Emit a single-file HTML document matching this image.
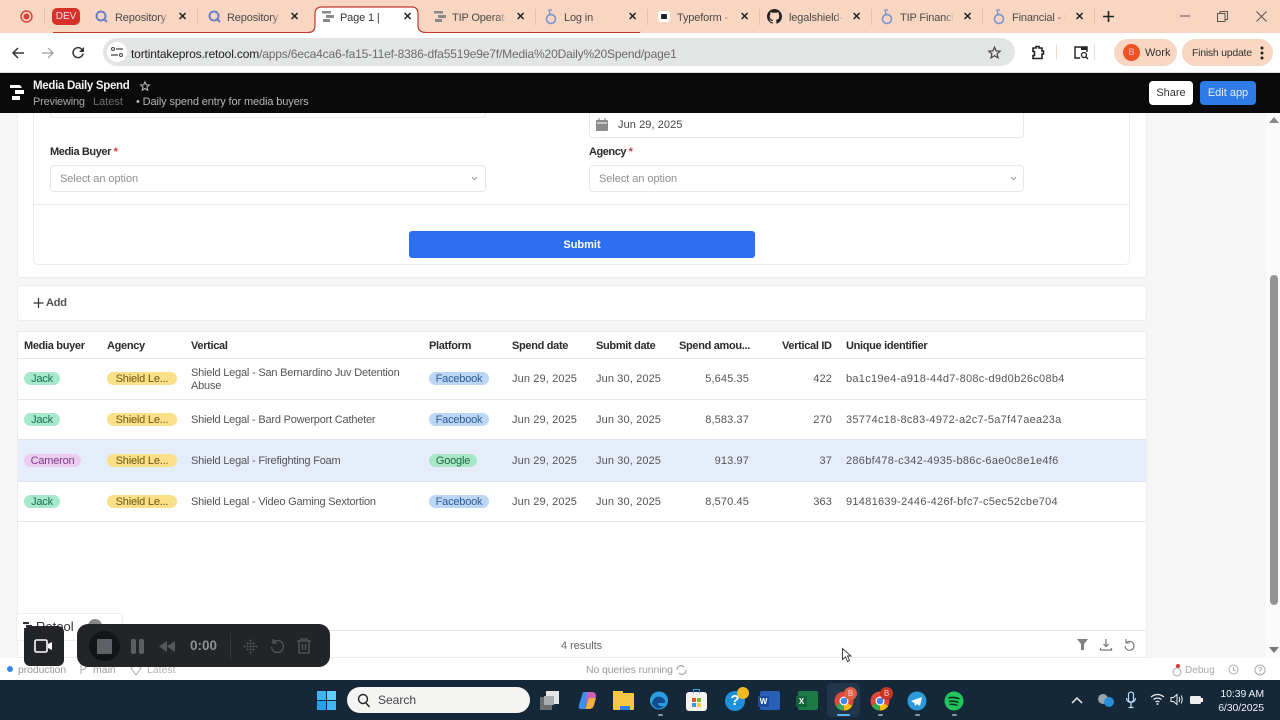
<!DOCTYPE html>
<html><head><meta charset="utf-8"><title>Media Daily Spend</title>
<style>
html,body{margin:0;padding:0;width:1280px;height:720px;overflow:hidden;background:#f6f6f6;font-family:"Liberation Sans",sans-serif}
.a{position:absolute}
.t{position:absolute;white-space:nowrap;line-height:16px}
.tab{position:absolute;top:10px;font-size:11px;line-height:16px;color:#4a4a4a;white-space:nowrap;letter-spacing:-.15px}
.f{width:54px;overflow:hidden;-webkit-mask-image:linear-gradient(90deg,#000 85%,transparent 100%);mask-image:linear-gradient(90deg,#000 85%,transparent 100%)}
.x{position:absolute;top:9px;font-size:11px;line-height:16px;color:#222;font-weight:bold}
.sep{position:absolute;top:9px;width:1px;height:16px;background:#e6bfa9}
.h{position:absolute;top:338px;font-size:11px;font-weight:bold;color:#2b2b2b;line-height:16px;white-space:nowrap;letter-spacing:-.32px}
.c{position:absolute;font-size:11px;color:#555;line-height:15px;white-space:nowrap;letter-spacing:.12px}
.v{letter-spacing:-.2px}
.u{letter-spacing:.28px}
.r{text-align:right}
.p{position:absolute;height:13px;border-radius:7px;font-size:11px;line-height:14px;text-align:center;white-space:nowrap;letter-spacing:-.2px}
.g{background:#a8e8cd;color:#17704e}.y{background:#fbe08a;color:#6e5610}.b{background:#bcd6f5;color:#2c5c96}.m{background:#eccdf0;color:#7a3a86}.gg{background:#a9e6c5;color:#1c6d47}
.line{position:absolute;left:17px;width:1129px;height:1px;background:#e8e8e8}
svg{position:absolute;overflow:visible}
</style></head><body>

<!-- tab strip -->
<div class="a" style="left:0;top:0;width:1280px;height:33px;background:#f9d6c1"></div>
<div class="a" style="left:0;top:33px;width:1280px;height:39px;background:#fff"></div>
<div class="a" style="left:53px;top:32px;width:262px;height:1px;background:#c0392f"></div>
<div class="a" style="left:420px;top:32px;width:220px;height:1px;background:#c0392f"></div>
<svg style="left:306px;top:6px" width="122" height="28"><path d="M2 26.500q7 0 7-7V8q0-7 7-7h90q6 0 6 7v11.500q0 7 8 7V28H2z" fill="#fff"/><path d="M2 26.500q7 0 7-7V8q0-7 7-7h90q6 0 6 7v11.500q0 7 8 7" fill="none" stroke="#c0392f" stroke-width="1.200"/></svg>

<svg style="left:20px;top:10px" width="14" height="14"><circle cx="6.500" cy="6.500" r="5.500" fill="none" stroke="#d9453c" stroke-width="1.500"/><circle cx="6.500" cy="6.500" r="3" fill="#d9453c"/></svg>
<div class="sep" style="left:44px"></div>
<div class="a" style="left:52px;top:8px;width:28px;height:17px;background:#d6322a;border-radius:5px;color:#fde;font-size:10px;line-height:17px;text-align:center">DEV</div>
<svg style="left:95px;top:10px" width="14" height="14"><circle cx="6" cy="6" r="4.500" fill="none" stroke="#6d7fc9" stroke-width="2"/><path d="M9 9l3 3" stroke="#6d7fc9" stroke-width="2"/></svg>
<div class="tab f" style="left:115px">Repository -</div><div class="x" style="left:178px">✕</div>
<div class="sep" style="left:197px"></div>
<svg style="left:208px;top:10px" width="14" height="14"><circle cx="6" cy="6" r="4.500" fill="none" stroke="#6d7fc9" stroke-width="2"/><path d="M9 9l3 3" stroke="#6d7fc9" stroke-width="2"/></svg>
<div class="tab f" style="left:227px">Repository -</div><div class="x" style="left:290px">✕</div>
<svg style="left:322px;top:11px" width="12" height="11"><path d="M0 0h9v2.500H0zM4 4h8v3H4zM1 8h7v3H1z" fill="#8a8a8a"/></svg>
<div class="tab" style="left:340px;color:#333">Page 1 |</div><div class="x" style="left:403px">✕</div>
<svg style="left:434px;top:11px" width="12" height="11"><path d="M0 0h9v2.500H0zM4 4h8v3H4zM1 8h7v3H1z" fill="#8a8a8a"/></svg>
<div class="tab f" style="left:452px">TIP Operatio</div><div class="x" style="left:516px">✕</div>
<div class="sep" style="left:535px"></div>
<svg style="left:545px;top:9px" width="12" height="16"><circle cx="6" cy="10" r="4.500" fill="none" stroke="#6f8fd0" stroke-width="1.500"/><path d="M5 5L4 1h3" fill="none" stroke="#6f8fd0" stroke-width="1.200"/></svg>
<div class="tab" style="left:564px">Log in</div><div class="x" style="left:628px">✕</div>
<div class="sep" style="left:647px"></div>
<div class="a" style="left:658px;top:11px;width:12px;height:11px;background:#fff;border-radius:3px"></div>
<div class="a" style="left:661px;top:14px;width:6px;height:5px;background:#222;border-radius:1px"></div>
<div class="tab f" style="left:677px">Typeform -</div><div class="x" style="left:740px">✕</div>
<div class="sep" style="left:759px"></div>
<svg style="left:767px;top:9px" width="15" height="15" viewBox="0 0 16 16"><path fill="#222" d="M8 0C3.580 0 0 3.580 0 8c0 3.540 2.290 6.530 5.470 7.590.4.070.55-.17.55-.38v-1.340c-2.230.48-2.690-1.070-2.690-1.070-.36-.93-.89-1.170-.89-1.170-.73-.5.050-.49.050-.49.800.060 1.230.830 1.230.830.710 1.220 1.870.87 2.330.66.070-.52.280-.87.510-1.070-1.780-.2-3.640-.89-3.640-3.950 0-.87.310-1.590.820-2.150-.08-.2-.36-1.020.080-2.120 0 0 .670-.21 2.200.82a7.600 7.600 0 0 1 4 0c1.530-1.040 2.200-.82 2.200-.82.440 1.100.160 1.920.080 2.120.510.560.820 1.270.820 2.150 0 3.070-1.870 3.750-3.650 3.950.290.250.540.730.540 1.480v2.190c0 .21.150.46.550.38A8 8 0 0 0 16 8c0-4.420-3.580-8-8-8z"/></svg>
<div class="tab f" style="left:789px">legalshield-</div><div class="x" style="left:852px">✕</div>
<div class="sep" style="left:871px"></div>
<svg style="left:881px;top:9px" width="12" height="16"><circle cx="6" cy="10" r="4.500" fill="none" stroke="#6f8fd0" stroke-width="1.500"/><path d="M5 5L4 1h3" fill="none" stroke="#6f8fd0" stroke-width="1.200"/></svg>
<div class="tab f" style="left:900px">TIP Financia</div><div class="x" style="left:963px">✕</div>
<div class="sep" style="left:982px"></div>
<svg style="left:993px;top:9px" width="12" height="16"><circle cx="6" cy="10" r="4.500" fill="none" stroke="#6f8fd0" stroke-width="1.500"/><path d="M5 5L4 1h3" fill="none" stroke="#6f8fd0" stroke-width="1.200"/></svg>
<div class="tab f" style="left:1012px">Financial - N</div><div class="x" style="left:1075px">✕</div>
<div class="sep" style="left:1094px"></div>
<svg style="left:1103px;top:11px" width="11" height="11"><path d="M5.500 0v11M0 5.500h11" stroke="#222" stroke-width="1.600"/></svg>
<svg style="left:1180px;top:15px" width="10" height="2"><path d="M0 1h10" stroke="#555"/></svg>
<svg style="left:1217px;top:11px" width="11" height="11"><rect x=".5" y="2.500" width="7.500" height="8" fill="none" stroke="#555"/><path d="M3 2.500V.5h7.500v8H8" fill="none" stroke="#555"/></svg>
<svg style="left:1256px;top:11px" width="11" height="11"><path d="M.5.5l10 10M10.500.5l-10 10" stroke="#555"/></svg>

<!-- toolbar -->
<svg style="left:12px;top:47px" width="13" height="12"><path d="M12 6H1M6 1L1 6l5 5" fill="none" stroke="#333" stroke-width="1.500"/></svg>
<svg style="left:42px;top:47px" width="13" height="12"><path d="M0 6h11M6 1l5 5-5 5" fill="none" stroke="#999" stroke-width="1.200"/></svg>
<svg style="left:72px;top:46px" width="13" height="13"><path d="M11 7.500A5 5 0 1 1 9.500 3L11.500 5" fill="none" stroke="#333" stroke-width="1.500"/><path d="M12 1v5H7z" fill="#333"/></svg>
<div class="a" style="left:103px;top:38px;width:912px;height:28px;background:#e3e5e5;border-radius:14px"></div>
<div class="a" style="left:107px;top:42px;width:20px;height:20px;background:#fff;border-radius:10px"></div>
<svg style="left:111px;top:47px" width="12" height="10"><path d="M5 2h7M0 8h7" stroke="#444" stroke-width="1.200"/><circle cx="2" cy="2" r="1.500" fill="none" stroke="#444"/><circle cx="10" cy="8" r="1.500" fill="none" stroke="#444"/></svg>
<div class="t" style="left:131px;top:46px;font-size:12px;color:#6a6a6a;letter-spacing:-.16px"><span style="color:#222">tortintakepros.retool.com</span>/apps/6eca4ca6-fa15-11ef-8386-dfa5519e9e7f/Media%20Daily%20Spend/page1</div>
<svg style="left:988px;top:46px" width="13" height="13" viewBox="0 0 24 24"><path d="M12 2l3 7 7.500.6-5.700 4.900 1.800 7.500L12 18l-6.600 4 1.800-7.500L1.500 9.600 9 9z" fill="none" stroke="#444" stroke-width="2.200"/></svg>
<svg style="left:1030px;top:45px" width="15" height="15" viewBox="0 0 15 15"><path d="M3 3h3V1.500h3V3h3v3h1.500v3H12v4.500H3v-3h1.500v-4H3z" fill="none" stroke="#222" stroke-width="1.600"/></svg>
<div class="a" style="left:1056px;top:44px;width:1px;height:16px;background:#f2d9ca"></div>
<svg style="left:1074px;top:46px" width="15" height="14"><path d="M6 12H1V1h12v5" fill="none" stroke="#222" stroke-width="1.400"/><rect x="7" y="1" width="6" height="3" fill="#222"/><circle cx="10" cy="9" r="2.500" fill="none" stroke="#222" stroke-width="1.300"/><path d="M12 11l2 2" stroke="#222" stroke-width="1.300"/></svg>
<div class="a" style="left:1094px;top:44px;width:1px;height:16px;background:#f2d9ca"></div>
<div class="a" style="left:1114px;top:39px;width:63px;height:27px;border-radius:14px;background:#f9d6c1"></div>
<div class="a" style="left:1123px;top:44px;width:17px;height:17px;border-radius:9px;background:#ec5424;color:#fbd;font-size:9px;line-height:17px;text-align:center">B</div>
<div class="t" style="left:1145px;top:45px;font-size:11px;color:#333">Work</div>
<div class="a" style="left:1182px;top:39px;width:91px;height:27px;border-radius:14px;background:#f9d6c1"></div>
<div class="t" style="left:1192px;top:45px;font-size:10.500px;color:#333;letter-spacing:-.25px">Finish update</div>
<svg style="left:1260px;top:46px" width="4" height="14"><circle cx="2" cy="2" r="1.500" fill="#222"/><circle cx="2" cy="7" r="1.500" fill="#222"/><circle cx="2" cy="12" r="1.500" fill="#222"/></svg>

<!-- app header -->
<div class="a" style="left:0;top:72px;width:1280px;height:41px;background:#0a0a0a;border-top:1px solid #ddd;box-sizing:border-box"></div>
<svg style="left:9px;top:85px" width="16" height="16"><path d="M1 0h10l2 3H1zM6 5h9v4H6zM3 11h8v4H3z" fill="#fff"/></svg>
<div class="t" style="left:33px;top:78px;font-size:11.500px;font-weight:bold;color:#f2f2f2;letter-spacing:-.3px">Media Daily Spend</div>
<svg style="left:140px;top:81px" width="10" height="10" viewBox="0 0 24 24"><path d="M12 2l3 7 7.500.6-5.700 4.900 1.800 7.500L12 18l-6.600 4 1.800-7.500L1.500 9.600 9 9z" fill="none" stroke="#bbb" stroke-width="2.500"/></svg>
<div class="t" style="left:33px;top:94px;font-size:11px;color:#a9a9a9;letter-spacing:-.2px">Previewing</div>
<div class="t" style="left:93px;top:94px;font-size:11px;color:#6f6f6f;letter-spacing:0">Latest</div>
<div class="t" style="left:136px;top:94px;font-size:11px;color:#b5b5b5;letter-spacing:-.12px">• Daily spend entry for media buyers</div>
<div class="a" style="left:1149px;top:81px;width:44px;height:24px;background:#fff;border-radius:4px;font-size:11px;line-height:24px;text-align:center;color:#333">Share</div>
<div class="a" style="left:1200px;top:81px;width:56px;height:24px;background:#2f7be8;border-radius:4px;font-size:11px;line-height:24px;text-align:center;color:#e6f0ff">Edit app</div>

<!-- page bg and scrollbar -->
<div class="a" style="left:1266px;top:113px;width:14px;height:545px;background:#fbfbfb"></div>
<svg style="left:1269px;top:116px" width="10" height="8"><path d="M0 7L5 1l5 6z" fill="#8a8a8a"/></svg>
<div class="a" style="left:1270px;top:275px;width:8px;height:330px;background:#949494;border-radius:4px"></div>
<svg style="left:1269px;top:646px" width="10" height="8"><path d="M0 1L5 7l5-6z" fill="#777"/></svg>

<!-- form panel -->
<div class="a" style="left:17px;top:113px;width:1130px;height:165px;background:#fff;border:1px solid #ececec;border-top:0;box-sizing:border-box;border-radius:0 0 4px 4px"></div>
<div class="a" style="left:33px;top:113px;width:1097px;height:152px;border:1px solid #ececec;border-top:0;box-sizing:border-box;border-radius:0 0 5px 5px"></div>
<div class="a" style="left:50px;top:113px;width:436px;height:5px;border:1px solid #ececec;border-top:0;box-sizing:border-box;border-radius:0 0 4px 4px"></div>
<div class="a" style="left:589px;top:113px;width:435px;height:25px;border:1px solid #e8e8e8;border-top:0;box-sizing:border-box;border-radius:0 0 4px 4px"></div>
<svg style="left:596px;top:118px" width="12" height="13"><rect y="2" width="12" height="11" rx="1" fill="#8c8c8c"/><path d="M3 0v3M9 0v3" stroke="#8c8c8c" stroke-width="1.200"/><path d="M1 5h10" stroke="#fff"/></svg>
<div class="t" style="left:618px;top:117px;font-size:11px;color:#444;letter-spacing:.07px">Jun 29, 2025</div>
<div class="t" style="left:50px;top:144px;font-size:11px;font-weight:bold;color:#2a2a2a;letter-spacing:-.4px">Media Buyer <span style="color:#d33">*</span></div>
<div class="t" style="left:589px;top:144px;font-size:11px;font-weight:bold;color:#2a2a2a;letter-spacing:-.45px">Agency <span style="color:#d33">*</span></div>
<div class="a" style="left:50px;top:165px;width:436px;height:27px;border:1px solid #e8e8e8;box-sizing:border-box;border-radius:4px"></div>
<div class="a" style="left:589px;top:165px;width:435px;height:27px;border:1px solid #e8e8e8;box-sizing:border-box;border-radius:4px"></div>
<div class="t" style="left:60px;top:171px;font-size:11px;color:#8f8f8f;letter-spacing:-.05px">Select an option</div>
<div class="t" style="left:599px;top:171px;font-size:11px;color:#8f8f8f;letter-spacing:-.05px">Select an option</div>
<svg style="left:471px;top:176px" width="7" height="5"><path d="M1 1l2.500 2.500L6 1" fill="none" stroke="#999"/></svg>
<svg style="left:1010px;top:176px" width="7" height="5"><path d="M1 1l2.500 2.500L6 1" fill="none" stroke="#999"/></svg>
<div class="a" style="left:33px;top:204px;width:1097px;height:1px;background:#ececec"></div>
<div class="a" style="left:409px;top:231px;width:346px;height:27px;background:#2d6ff0;border-radius:3px;color:#fff;font-size:11px;font-weight:bold;line-height:28px;text-align:center">Submit</div>

<!-- add panel -->
<div class="a" style="left:17px;top:285px;width:1130px;height:36px;background:#fff;border:1px solid #ececec;box-sizing:border-box;border-radius:3px"></div>
<svg style="left:33px;top:297px" width="11" height="11"><path d="M5.500 1v10M.5 6h10" stroke="#333" stroke-width="1.200"/></svg>
<div class="t" style="left:46px;top:295px;font-size:11px;color:#333;font-weight:bold;opacity:.85;letter-spacing:-.2px">Add</div>

<!-- table -->
<div class="a" style="left:17px;top:331px;width:1130px;height:327px;background:#fff;border:1px solid #ececec;box-sizing:border-box"></div>
<div class="a" style="left:18px;top:440px;width:1128px;height:41px;background:#e6edfa"></div>
<div class="line" style="top:358px"></div><div class="line" style="top:399px"></div><div class="line" style="top:439px;background:#dfe4ee"></div><div class="line" style="top:481px;background:#dfe4ee"></div><div class="line" style="top:521px"></div><div class="line" style="top:630px"></div>

<div class="h" style="left:24px">Media buyer</div>
<div class="h" style="left:107px">Agency</div>
<div class="h" style="left:191px">Vertical</div>
<div class="h" style="left:429px">Platform</div>
<div class="h" style="left:512px">Spend date</div>
<div class="h" style="left:596px">Submit date</div>
<div class="h" style="left:679px">Spend amou...</div>
<div class="h" style="left:782px">Vertical ID</div>
<div class="h" style="left:846px">Unique identifier</div>

<!-- row 1 -->
<div class="p g" style="left:24px;top:372px;width:36px">Jack</div>
<div class="p y" style="left:107px;top:372px;width:70px">Shield Le...</div>
<div class="c v" style="left:191px;top:366px">Shield Legal - San Bernardino Juv Detention</div>
<div class="c v" style="left:191px;top:379px">Abuse</div>
<div class="p b" style="left:429px;top:372px;width:60px">Facebook</div>
<div class="c" style="left:512px;top:372px">Jun 29, 2025</div>
<div class="c" style="left:596px;top:372px">Jun 30, 2025</div>
<div class="c r" style="left:689px;top:372px;width:60px">5,645.35</div>
<div class="c r" style="left:792px;top:372px;width:40px">422</div>
<div class="c u" style="left:846px;top:372px">ba1c19e4-a918-44d7-808c-d9d0b26c08b4</div>
<!-- row 2 -->
<div class="p g" style="left:24px;top:413px;width:36px">Jack</div>
<div class="p y" style="left:107px;top:413px;width:70px">Shield Le...</div>
<div class="c v" style="left:191px;top:413px">Shield Legal - Bard Powerport Catheter</div>
<div class="p b" style="left:429px;top:413px;width:60px">Facebook</div>
<div class="c" style="left:512px;top:413px">Jun 29, 2025</div>
<div class="c" style="left:596px;top:413px">Jun 30, 2025</div>
<div class="c r" style="left:689px;top:413px;width:60px">8,583.37</div>
<div class="c r" style="left:792px;top:413px;width:40px">270</div>
<div class="c u" style="left:846px;top:413px">35774c18-8c83-4972-a2c7-5a7f47aea23a</div>
<!-- row 3 -->
<div class="p m" style="left:24px;top:454px;width:57px">Cameron</div>
<div class="p y" style="left:107px;top:454px;width:70px">Shield Le...</div>
<div class="c v" style="left:191px;top:454px">Shield Legal - Firefighting Foam</div>
<div class="p gg" style="left:429px;top:454px;width:48px">Google</div>
<div class="c" style="left:512px;top:454px">Jun 29, 2025</div>
<div class="c" style="left:596px;top:454px">Jun 30, 2025</div>
<div class="c r" style="left:689px;top:454px;width:60px">913.97</div>
<div class="c r" style="left:792px;top:454px;width:40px">37</div>
<div class="c u" style="left:846px;top:454px">286bf478-c342-4935-b86c-6ae0c8e1e4f6</div>
<!-- row 4 -->
<div class="p g" style="left:24px;top:495px;width:36px">Jack</div>
<div class="p y" style="left:107px;top:495px;width:70px">Shield Le...</div>
<div class="c v" style="left:191px;top:495px">Shield Legal - Video Gaming Sextortion</div>
<div class="p b" style="left:429px;top:495px;width:60px">Facebook</div>
<div class="c" style="left:512px;top:495px">Jun 29, 2025</div>
<div class="c" style="left:596px;top:495px">Jun 30, 2025</div>
<div class="c r" style="left:689px;top:495px;width:60px">8,570.45</div>
<div class="c r" style="left:792px;top:495px;width:40px">363</div>
<div class="c u" style="left:846px;top:495px">91481639-2446-426f-bfc7-c5ec52cbe704</div>

<!-- table footer -->
<div class="t" style="left:561px;top:638px;font-size:11px;color:#666;letter-spacing:-.05px">4 results</div>
<svg style="left:1077px;top:639px" width="11" height="11"><path d="M0 0h11L7 5v6H4V5z" fill="#808080"/></svg>
<svg style="left:1100px;top:639px" width="12" height="12"><path d="M6 0v7M3.500 5L6 7.500 8.500 5M.5 9v2h11V9" fill="none" stroke="#777" stroke-width="1.200"/></svg>
<svg style="left:1124px;top:639px" width="11" height="12"><path d="M2.500 3.500A4.500 4.500 0 1 1 1 7" fill="none" stroke="#777" stroke-width="1.100"/><path d="M2 0v4h4" fill="none" stroke="#777" stroke-width="1.100"/></svg>

<!-- status bar -->
<div class="a" style="left:0;top:658px;width:1280px;height:22px;background:#fff"></div>
<div class="a" style="left:7px;top:666px;width:6px;height:6px;border-radius:3px;background:#3a84e0"></div>
<div class="t" style="left:18px;top:662px;font-size:10.500px;color:#9a9a9a;letter-spacing:-.1px">production</div>
<svg style="left:79px;top:663px" width="9" height="13"><path d="M2 1v10M2 7q5 0 5-5" fill="none" stroke="#aaa"/></svg>
<div class="t" style="left:93px;top:662px;font-size:10.500px;color:#9a9a9a">main</div>
<svg style="left:130px;top:664px" width="12" height="12"><path d="M1 4l5-3 5 3-5 7z" fill="none" stroke="#aaa"/></svg>
<div class="t" style="left:147px;top:662px;font-size:10.500px;color:#b0b0b0">Latest</div>
<div class="t" style="left:586px;top:662px;font-size:10.500px;color:#9a9a9a;letter-spacing:-.1px">No queries running</div>
<svg style="left:676px;top:665px" width="11" height="10"><path d="M1 5a4 4 0 0 1 7-3M10 5a4 4 0 0 1-7 3" fill="none" stroke="#999"/></svg>
<svg style="left:1171px;top:664px" width="12" height="13"><circle cx="6" cy="8" r="4" fill="none" stroke="#aaa"/><circle cx="7" cy="2" r="2" fill="#d33"/></svg>
<div class="t" style="left:1185px;top:663px;font-size:10px;color:#aaa;letter-spacing:.05px">Debug</div>
<svg style="left:1228px;top:664px" width="11" height="11"><circle cx="5.500" cy="5.500" r="4.500" fill="none" stroke="#aaa"/><path d="M5.500 3v3l2 1" fill="none" stroke="#aaa"/></svg>
<svg style="left:1254px;top:664px" width="12" height="12"><circle cx="6" cy="6" r="5" fill="none" stroke="#aaa"/><path d="M4.500 4.500a1.500 1.500 0 1 1 1.500 2v1M6 9v1" fill="none" stroke="#aaa"/></svg>

<!-- retool badge behind recorder -->
<div class="a" style="left:16px;top:613px;width:107px;height:28px;background:#fff;border:1px solid #eee;border-radius:4px;box-sizing:border-box"></div>
<svg style="left:23px;top:622px" width="9" height="9"><path d="M0 0h6v2H0zM3 3h6v2H3zM1 6h5v2H1z" fill="#333"/></svg>
<div class="t" style="left:36px;top:619px;font-size:13px;color:#333">Retool</div>
<div class="a" style="left:88px;top:619px;width:14px;height:14px;border-radius:7px;background:#888"></div>

<!-- recorder -->
<div class="a" style="left:24px;top:626px;width:40px;height:40px;background:#232427;border-radius:6px"></div>
<svg style="left:34px;top:639px" width="19" height="14"><rect x="1" y="1" width="12" height="12" rx="1.500" fill="none" stroke="#fff" stroke-width="1.600"/><path d="M14 5l4-2v8l-4-2z" fill="#fff"/></svg>
<div class="a" style="left:77px;top:624px;width:253px;height:43px;background:#232427;border-radius:11px"></div>
<div class="a" style="left:89px;top:631px;width:31px;height:30px;background:#131416;border-radius:15px"></div>
<div class="a" style="left:97px;top:639px;width:15px;height:15px;background:#5e6066;border-radius:1px"></div>
<div class="a" style="left:131px;top:639px;width:5px;height:15px;background:#5b5d62;border-radius:2px"></div>
<div class="a" style="left:139px;top:639px;width:5px;height:15px;background:#5b5d62;border-radius:2px"></div>
<svg style="left:159px;top:641px" width="16" height="11"><path d="M8 0v11L0 5.500zM16 0v11L8 5.500z" fill="#55575c"/></svg>
<div class="t" style="left:190px;top:638px;font-size:13.500px;font-weight:bold;color:#8e9096">0:00</div>
<div class="a" style="left:230px;top:633px;width:1px;height:27px;background:#34353a"></div>
<svg style="left:243px;top:639px" width="15" height="15"><g fill="#55575c"><circle cx="7.500" cy="1.500" r="1"/><circle cx="4.500" cy="4.500" r="1"/><circle cx="7.500" cy="4.500" r="1"/><circle cx="10.500" cy="4.500" r="1"/><circle cx="1.500" cy="7.500" r="1"/><circle cx="4.500" cy="7.500" r="1"/><circle cx="7.500" cy="7.500" r="1"/><circle cx="10.500" cy="7.500" r="1"/><circle cx="13.500" cy="7.500" r="1"/><circle cx="4.500" cy="10.500" r="1"/><circle cx="7.500" cy="10.500" r="1"/><circle cx="10.500" cy="10.500" r="1"/><circle cx="7.500" cy="13.500" r="1"/></g></svg>
<svg style="left:270px;top:639px" width="15" height="15"><path d="M3 3.500A6 6 0 1 1 1.500 8" fill="none" stroke="#55575c" stroke-width="1.300"/><path d="M3 0v4h4" fill="none" stroke="#55575c" stroke-width="1.300"/></svg>
<svg style="left:297px;top:638px" width="14" height="16"><path d="M0 3h14M4 3V1h6v2M2 3v12h10V3M5.500 6v6M8.500 6v6" fill="none" stroke="#55575c" stroke-width="1.300"/></svg>

<!-- taskbar -->
<div class="a" style="left:0;top:680px;width:1280px;height:40px;background:#15283a"></div>
<div class="a" style="left:317px;top:691px;width:9px;height:9px;background:#3fb6f2"></div>
<div class="a" style="left:327px;top:691px;width:9px;height:9px;background:#5fd0fb"></div>
<div class="a" style="left:317px;top:701px;width:9px;height:9px;background:#2a9fe8"></div>
<div class="a" style="left:327px;top:701px;width:9px;height:9px;background:#3fb6f2"></div>
<div class="a" style="left:347px;top:687px;width:183px;height:26px;background:#f4f4f2;border-radius:13px"></div>
<svg style="left:357px;top:693px" width="14" height="15"><circle cx="6" cy="6" r="4.500" fill="none" stroke="#222" stroke-width="1.400"/><path d="M9 10l3.500 4" stroke="#222" stroke-width="1.400"/></svg>
<div class="t" style="left:378px;top:692px;font-size:12px;color:#444">Search</div>
<div class="a" style="left:540px;top:697px;width:12px;height:13px;background:#6c6f72"></div>
<div class="a" style="left:546px;top:691px;width:13px;height:13px;background:#e6e6e6"></div>
<div class="a" style="left:544px;top:696px;width:10px;height:9px;background:#a9abad"></div>
<svg style="left:578px;top:691px" width="19" height="19"><path d="M5 1h6L7 18H3Q0 18 1 14z" fill="#3d8ff0"/><path d="M9 1h5q4 0 4 4l-2 9q-1 4-5 4H8z" fill="#d260b8"/><path d="M11 7h7l-2 7q-1 4-5 4H7z" fill="#f0b040"/></svg>
<div class="a" style="left:613px;top:693px;width:21px;height:17px;background:#f5c742;border-radius:1px"></div>
<div class="a" style="left:613px;top:691px;width:10px;height:4px;background:#f5c742"></div>
<div class="a" style="left:620px;top:706px;width:10px;height:4px;background:#2f86d6"></div>
<svg style="left:649px;top:691px" width="20" height="19"><circle cx="10" cy="9.500" r="9" fill="#2a9ee0"/><path d="M3 13q2-9 9-7 5 2 4 6h-7q0 4 6 3-6 6-12-2z" fill="#134a8c"/></svg>
<div class="a" style="left:658px;top:714px;width:5px;height:2px;background:#8a96a2;border-radius:1px"></div>
<div class="a" style="left:686px;top:692px;width:21px;height:19px;background:#f6f2ee;border-radius:3px"></div>
<div class="a" style="left:693px;top:689px;width:7px;height:4px;border:1px solid #2a9ee0;border-bottom:0;box-sizing:border-box"></div>
<div class="a" style="left:692px;top:698px;width:4px;height:4px;background:#e85a2c"></div><div class="a" style="left:697px;top:698px;width:4px;height:4px;background:#7cb830"></div>
<div class="a" style="left:692px;top:703px;width:4px;height:4px;background:#2a9ee0"></div><div class="a" style="left:697px;top:703px;width:4px;height:4px;background:#f5c742"></div>
<div class="a" style="left:725px;top:691px;width:20px;height:20px;border-radius:10px;background:#1e8fd8;color:#fff;font-size:15px;line-height:20px;text-align:center;font-weight:bold">?</div>
<div class="a" style="left:737px;top:687px;width:12px;height:12px;border-radius:6px;background:#f2b91e"></div>
<div class="a" style="left:760px;top:691px;width:20px;height:19px;background:#2a5fb8;border-radius:2px"></div>
<div class="a" style="left:758px;top:696px;width:11px;height:11px;background:#1d4a9c;color:#fff;font-size:8px;line-height:11px;text-align:center;font-weight:bold">W</div>
<div class="a" style="left:798px;top:691px;width:20px;height:19px;background:#1c7a45;border-radius:2px"></div>
<div class="a" style="left:796px;top:696px;width:11px;height:11px;background:#12633a;color:#fff;font-size:8px;line-height:11px;text-align:center;font-weight:bold">X</div>

<div class="a" style="left:827px;top:683px;width:33px;height:34px;background:#22364a;border-radius:4px"></div>
<svg style="left:834px;top:691px" width="20" height="20"><circle cx="10" cy="10" r="9.500" fill="#e0483c"/><path d="M10 10L1.800 15A9.500 9.500 0 0 0 10 19.500z" fill="#35a853"/><path d="M10 10l8.200 5A9.500 9.500 0 0 1 10 19.500z" fill="#fbbc05"/><circle cx="10" cy="10" r="4.500" fill="#fff"/><circle cx="10" cy="10" r="3.300" fill="#4285f4"/></svg>
<div class="a" style="left:844px;top:687px;width:13px;height:13px;border-radius:7px;background:#e2603f;color:#fcd;font-size:8px;line-height:13px;text-align:center">B</div>
<div class="a" style="left:837px;top:714px;width:13px;height:2px;background:#5db4ee;border-radius:1px"></div>
<svg style="left:870px;top:691px" width="20" height="20"><circle cx="10" cy="10" r="9.500" fill="#e0483c"/><path d="M10 10L1.800 15A9.500 9.500 0 0 0 10 19.500z" fill="#35a853"/><path d="M10 10l8.200 5A9.500 9.500 0 0 1 10 19.500z" fill="#fbbc05"/><circle cx="10" cy="10" r="4.500" fill="#fff"/><circle cx="10" cy="10" r="3.300" fill="#4285f4"/></svg>
<div class="a" style="left:880px;top:687px;width:13px;height:13px;border-radius:7px;background:#c8361f;color:#fcd;font-size:8px;line-height:13px;text-align:center">B</div>
<div class="a" style="left:878px;top:714px;width:5px;height:2px;background:#8a96a2;border-radius:1px"></div>
<svg style="left:907px;top:691px" width="20" height="20"><circle cx="10" cy="10" r="9.500" fill="#2a9bd8"/><path d="M4 10l11-4-2 9-3-2-2 2-.5-3z" fill="#fff"/></svg>
<div class="a" style="left:915px;top:714px;width:5px;height:2px;background:#8a96a2;border-radius:1px"></div>
<svg style="left:944px;top:691px" width="20" height="20"><circle cx="10" cy="10" r="9.500" fill="#22c55e"/><path d="M4.500 7q6-1.500 11 1M5 10.500q5-1 9.500 1M5.500 13.500q4-.8 8 1" fill="none" stroke="#0d2b1c" stroke-width="1.500"/></svg>
<div class="a" style="left:952px;top:714px;width:5px;height:2px;background:#8a96a2;border-radius:1px"></div>
<svg style="left:1071px;top:696px" width="12" height="8"><path d="M1 7l5-5 5 5" fill="none" stroke="#eee" stroke-width="1.500"/></svg>
<svg style="left:1097px;top:692px" width="17" height="16"><circle cx="6" cy="7" r="5" fill="#9aa4ac"/><circle cx="12" cy="10" r="5" fill="#2a8fd8"/></svg>
<svg style="left:1126px;top:691px" width="10" height="18"><rect x="2.500" y="1" width="5" height="10" rx="2.500" fill="none" stroke="#b8dcf5" stroke-width="1.200"/><path d="M.5 7a4.500 4.500 0 0 0 9 0M5 11.500V16M2.500 16.500h5" fill="none" stroke="#b8dcf5" stroke-width="1.200"/></svg>
<svg style="left:1150px;top:693px" width="15" height="12"><path d="M1 4q6.500-5 13 0M3.500 6.500q4-3 8 0M5.500 9q2-1.500 4 0" fill="none" stroke="#eee" stroke-width="1.200"/><circle cx="7.500" cy="11" r="1" fill="#eee"/></svg>
<svg style="left:1170px;top:693px" width="14" height="13"><path d="M1 4.500h2.500L7 1.500v10L3.500 8.500H1z" fill="none" stroke="#eee"/><path d="M9 4q1.500 2.500 0 5M11 2.500q2.500 4 0 8" fill="none" stroke="#eee"/></svg>
<svg style="left:1189px;top:693px" width="15" height="12"><rect x="1" y="3" width="11" height="8" rx="1.500" fill="#eee"/><rect x="12" y="5" width="2" height="4" fill="#eee"/></svg>
<div class="t" style="left:1205px;top:686px;width:59px;text-align:right;font-size:10.500px;color:#eef2f5;letter-spacing:-.1px">10:39 AM</div>
<div class="t" style="left:1205px;top:700px;width:59px;text-align:right;font-size:10.500px;color:#eef2f5;letter-spacing:-.1px">6/30/2025</div>

<!-- cursor -->
<svg style="left:842px;top:648px" width="10" height="15"><path d="M.5.500v11l3-2.500 2 4.500 2-1-2-4.500h3.500z" fill="#fff" stroke="#333" stroke-width=".9"/></svg>

</body></html>
